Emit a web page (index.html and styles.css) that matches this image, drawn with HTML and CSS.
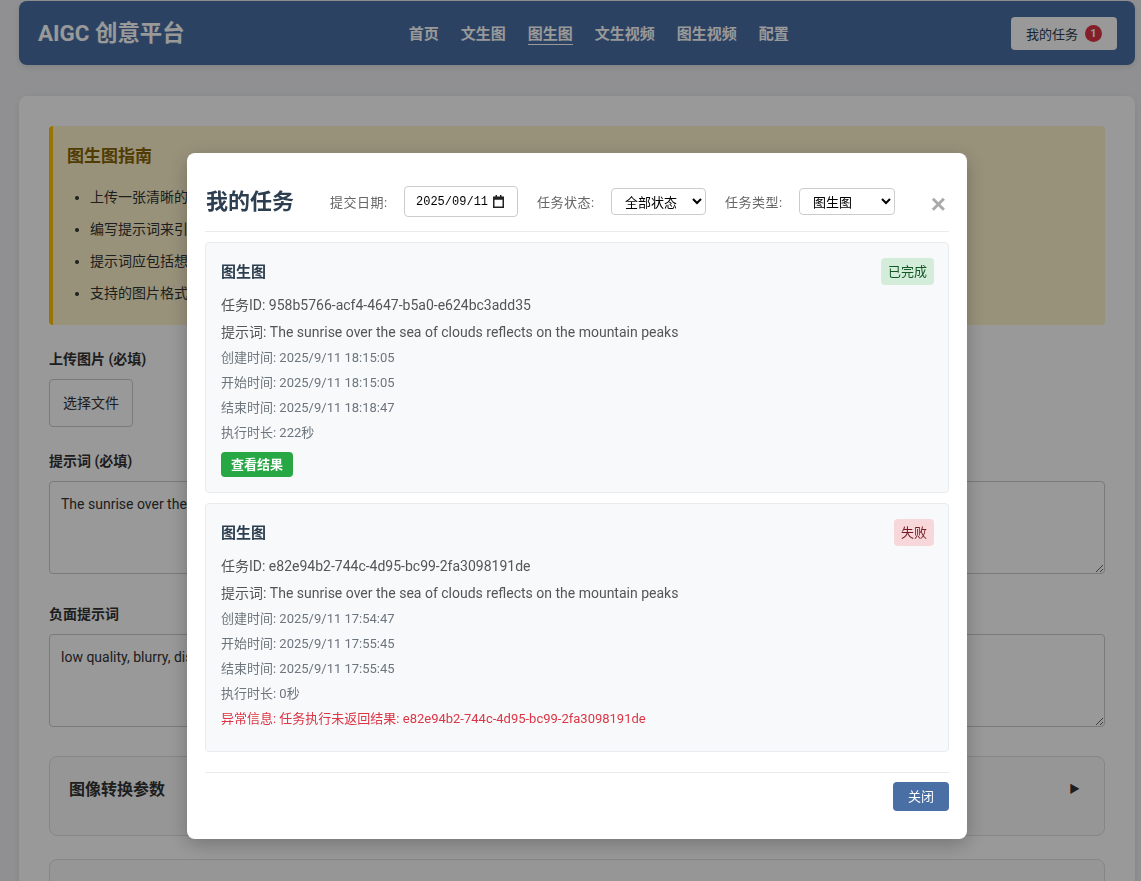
FILE: index.html
```html
<!DOCTYPE html>
<html lang="zh-CN">
<head>
<meta charset="utf-8">
<title>AIGC 创意平台 - 图生图</title>
<link rel="stylesheet" href="styles.css">
</head>
<body>
<div class="page">
  <header class="topbar">
    <div class="logo">AIGC 创意平台</div>
    <nav class="nav">
      <a class="nav-item">首页</a>
      <a class="nav-item">文生图</a>
      <a class="nav-item active">图生图</a>
      <a class="nav-item">文生视频</a>
      <a class="nav-item">图生视频</a>
      <a class="nav-item">配置</a>
    </nav>
    <button class="task-btn">我的任务<span class="count">1</span></button>
  </header>

  <main class="main-card">
    <section class="guide">
      <h3 class="guide-title">图生图指南</h3>
      <ul class="guide-list">
        <li>上传一张清晰的图片作为基础图像</li>
        <li>编写提示词来引导图像的转换方向</li>
        <li>提示词应包括想要的风格、场景和细节</li>
        <li>支持的图片格式：JPG、PNG、WEBP</li>
      </ul>
    </section>

    <div class="field field-file">
      <label class="field-label">上传图片 (必填)</label>
      <div class="file-btn">选择文件</div>
    </div>

    <div class="field field-ta">
      <label class="field-label">提示词 (必填)</label>
      <textarea class="text-area">The sunrise over the sea of clouds reflects on the mountain peaks</textarea>
    </div>

    <div class="field field-ta field-last">
      <label class="field-label">负面提示词</label>
      <textarea class="text-area">low quality, blurry, distorted</textarea>
    </div>

    <div class="collapse">
      <span class="collapse-title">图像转换参数</span>
      <span class="collapse-arrow">&#9654;</span>
    </div>
    <div class="collapse">
      <span class="collapse-title">高级设置</span>
      <span class="collapse-arrow">&#9654;</span>
    </div>
  </main>
</div>

<div class="overlay">
  <div class="modal">
    <div class="modal-head">
      <h2 class="modal-title">我的任务</h2>
      <div class="filter">
        <span class="filter-label">提交日期:</span>
        <div class="date-box">
          <span class="date-text">2025/09/11</span>
          <svg class="cal-icon" width="11" height="13" viewBox="0 0 11 13">
            <rect x="0.75" y="2.25" width="9.5" height="10" fill="none" stroke="#222" stroke-width="1.5"/>
            <rect x="0.75" y="2.25" width="9.5" height="2.5" fill="#222"/>
            <rect x="2.5" y="0" width="1.5" height="3" fill="#222"/>
            <rect x="7" y="0" width="1.5" height="3" fill="#222"/>
          </svg>
        </div>
      </div>
      <div class="filter">
        <span class="filter-label">任务状态:</span>
        <select class="sel sel-status"><option>全部状态</option></select>
      </div>
      <div class="filter">
        <span class="filter-label">任务类型:</span>
        <select class="sel sel-type"><option>图生图</option></select>
      </div>
      <span class="close-x">&times;</span>
    </div>

    <div class="modal-body">
      <div class="task">
        <div class="task-head">
          <span class="task-title">图生图</span>
          <span class="status status-done">已完成</span>
        </div>
        <div class="line line-main first">任务ID: 958b5766-acf4-4647-b5a0-e624bc3add35</div>
        <div class="line line-main">提示词: The sunrise over the sea of clouds reflects on the mountain peaks</div>
        <div class="line line-sub">创建时间: 2025/9/11 18:15:05</div>
        <div class="line line-sub">开始时间: 2025/9/11 18:15:05</div>
        <div class="line line-sub">结束时间: 2025/9/11 18:18:47</div>
        <div class="line line-sub">执行时长: 222秒</div>
        <button class="view-btn">查看结果</button>
      </div>

      <div class="task">
        <div class="task-head">
          <span class="task-title">图生图</span>
          <span class="status status-fail">失败</span>
        </div>
        <div class="line line-main first">任务ID: e82e94b2-744c-4d95-bc99-2fa3098191de</div>
        <div class="line line-main">提示词: The sunrise over the sea of clouds reflects on the mountain peaks</div>
        <div class="line line-sub">创建时间: 2025/9/11 17:54:47</div>
        <div class="line line-sub">开始时间: 2025/9/11 17:55:45</div>
        <div class="line line-sub">结束时间: 2025/9/11 17:55:45</div>
        <div class="line line-sub">执行时长: 0秒</div>
        <div class="line line-sub line-error">异常信息: 任务执行未返回结果: e82e94b2-744c-4d95-bc99-2fa3098191de</div>
      </div>
    </div>

    <div class="modal-foot">
      <button class="close-btn">关闭</button>
    </div>
  </div>
</div>
</body>
</html>
```

FILE: styles.css
```css
* { box-sizing: border-box; }

html, body {
  margin: 0;
  padding: 0;
}

body {
  background: #f0f1f3;
  font-family: "Segoe UI", Roboto, "Noto Sans CJK SC", sans-serif;
  color: #333;
  font-size: 14px;
  height: 881px;
  overflow: hidden;
}

.page {
  padding: 1px 6px 0 19px;
}

/* ---------- top bar ---------- */
.topbar {
  height: 64px;
  background: #4a6fa5;
  border-radius: 8px;
  padding: 0 18px 0 19px;
  display: flex;
  align-items: center;
  justify-content: space-between;
  box-shadow: 0 2px 6px rgba(0,0,0,0.1);
}

.logo {
  color: #fff;
  font-size: 22.4px;
  font-weight: 700;
  line-height: 30px;
}

.nav {
  display: flex;
  gap: 22px;
  margin-left: 2px;
}

.nav-item {
  color: #fff;
  font-size: 15px;
  font-weight: 700;
  line-height: 20px;
  padding-top: 2px;
  border-bottom: 1px solid transparent;
  padding-bottom: 0;
}

.nav-item.active {
  border-bottom-color: #fff;
}

.task-btn {
  height: 33px;
  padding: 0 15px 0 15px;
  background: #fff;
  border: none;
  border-radius: 4px;
  color: #2c3e50;
  font-family: inherit;
  font-size: 13px;
  display: flex;
  align-items: center;
  gap: 7px;
}

.count {
  width: 17px;
  height: 17px;
  border-radius: 50%;
  background: #dc3545;
  color: #fff;
  font-size: 11px;
  font-weight: 700;
  display: flex;
  align-items: center;
  justify-content: center;
}

/* ---------- main card ---------- */
.main-card {
  margin-top: 31px;
  background: #fff;
  border-radius: 8px;
  padding: 30px;
  box-shadow: 0 2px 10px rgba(0,0,0,0.08);
  height: 900px;
}

.guide {
  background: #fff3cd;
  border-left: 4px solid #ffc107;
  border-radius: 4px;
  padding: 20px 15px 21px 14px;
  margin-bottom: 24px;
}

.guide-title {
  margin: 0;
  color: #856404;
  font-size: 17px;
  line-height: 20px;
  font-weight: 700;
}

.guide-list {
  margin: 20px 0 0;
  padding-left: 23px;
  color: #333;
  font-size: 14px;
  line-height: 22px;
}

.guide-list li + li {
  margin-top: 10px;
}

.field-file {
  margin-bottom: 24px;
}

.field-ta {
  margin-bottom: 30px;
}

.field-ta.field-last {
  margin-bottom: 29px;
}

.field-label {
  display: block;
  font-size: 14px;
  font-weight: 700;
  line-height: 20px;
  margin-bottom: 10px;
  color: #333;
}

.file-btn {
  display: inline-block;
  border: 1px solid #ccc;
  border-radius: 4px;
  padding: 13px 13px;
  font-size: 14px;
  line-height: 20px;
  color: #333;
}

.text-area {
  display: block;
  width: 100%;
  height: 93px;
  border: 1px solid #ccc;
  border-radius: 4px;
  padding: 11px 11px 10px;
  font-family: inherit;
  font-size: 14px;
  line-height: 22px;
  color: #333;
  resize: vertical;
}

.collapse {
  height: 80px;
  border: 1px solid #e0e0e0;
  border-radius: 8px;
  background: #fafafa;
  padding: 23px 20px 0 19px;
  display: flex;
  justify-content: space-between;
  margin-bottom: 23px;
}

.collapse-title {
  font-size: 16px;
  font-weight: 700;
  line-height: 20px;
  color: #333;
}

.collapse-arrow {
  font-size: 11px;
  line-height: 20px;
  color: #333;
  padding-right: 4px;
}

/* ---------- modal ---------- */
.overlay {
  position: fixed;
  inset: 0;
  background: rgba(0,0,0,0.4);
}

.modal {
  position: absolute;
  left: 187px;
  top: 153px;
  width: 780px;
  background: #fff;
  border-radius: 8px;
  padding: 20px 18px 28px;
  box-shadow: 0 5px 20px rgba(0,0,0,0.25);
}

.modal-head {
  display: flex;
  align-items: center;
  padding: 13px 0 14px;
  border-bottom: 1px solid #e9ecef;
}

.modal-title {
  margin: 0 17px 0 1px;
  font-size: 22px;
  line-height: 30px;
  font-weight: 700;
  color: #2c3e50;
}

.filter {
  display: flex;
  align-items: center;
  margin-left: 19px;
}

.filter-label {
  display: inline-block;
  width: 74px;
  font-size: 13px;
  color: #666;
  letter-spacing: 0.5px;
}

.date-box {
  width: 114px;
  height: 31px;
  border: 1px solid #ccc;
  border-radius: 4px;
  display: flex;
  align-items: center;
  justify-content: space-between;
  padding: 0 13px 0 11px;
}

.date-text {
  font-family: "Liberation Mono", "DejaVu Sans Mono", monospace;
  font-size: 12px;
  color: #000;
}

.sel {
  height: 27px;
  border: 1px solid #ccc;
  border-radius: 4px;
  background: #fff;
  font-family: "Noto Sans CJK SC", sans-serif;
  font-size: 13px;
  color: #000;
  padding: 0 4px 0 9px;
}

.sel-status { width: 95px; }
.sel-type { width: 96px; }

.close-x {
  margin-left: auto;
  margin-right: 3px;
  font-family: "Liberation Sans", Arial, sans-serif;
  font-size: 26px;
  font-weight: 700;
  line-height: 26px;
  color: #aaa;
  position: relative;
  top: 2px;
}

.modal-body {
  margin-top: 10px;
}

.task {
  background: #f8f9fa;
  border: 1px solid #e9ecef;
  border-radius: 4px;
  padding: 15px 14px 15px 15px;
  margin-bottom: 10px;
}

.task-head {
  display: flex;
  align-items: center;
  justify-content: space-between;
}

.task-title {
  font-size: 15px;
  font-weight: 700;
  color: #2c3e50;
  position: relative;
  top: -1px;
}

.status {
  font-size: 13px;
  line-height: 19px;
  padding: 4px 7px;
  border-radius: 4px;
}

.status-done {
  background: #d4edda;
  color: #155724;
}

.status-fail {
  background: #f8d7da;
  color: #721c24;
}

.line {
  margin-top: 5px;
}

.line-main {
  font-size: 14px;
  line-height: 21px;
  color: #555;
  margin-top: 6px;
}

.line-main.first {
  margin-top: 10px;
}

.line-sub {
  font-size: 13px;
  line-height: 20px;
  color: #6c757d;
}

.line-error {
  color: #dc3545;
  margin-bottom: 7px;
}

.view-btn {
  margin-top: 9px;
  background: #28a745;
  color: #fff;
  border: none;
  border-radius: 4px;
  font-family: inherit;
  font-size: 13px;
  font-weight: 700;
  line-height: 17px;
  padding: 4px 10px;
  display: block;
}

.modal-foot {
  margin-top: 20px;
  border-top: 1px solid #e9ecef;
  padding-top: 9px;
  display: flex;
  justify-content: flex-end;
}

.close-btn {
  background: #4a6fa5;
  color: #fff;
  border: none;
  border-radius: 4px;
  font-family: inherit;
  font-size: 13px;
  line-height: 19px;
  padding: 5px 15px;
}
```
